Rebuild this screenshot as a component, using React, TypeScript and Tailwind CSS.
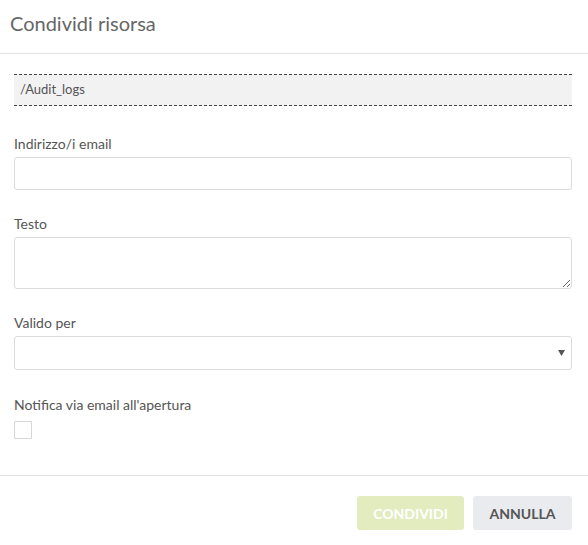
import React from "react";

export default function App() {
  return (
    <div className="w-[588px] h-[545px] bg-white flex flex-col" style={{ fontFamily: "Lato, 'Open Sans', sans-serif" }}>
      <div className="h-[54px] border-b border-[#e3e3e3] px-[10px] pt-[11px]">
        <div className="text-[20px] leading-[24px] text-[#666]">Condividi risorsa</div>
      </div>
      <div className="pl-[14px] pr-[16px] pt-[20px] flex flex-col">
        <div className="h-[32px] border-y border-dashed border-[#444] bg-[#f2f2f2] flex items-center pl-[6px] text-[13px] text-[#555]">
          /Audit_logs
        </div>
        <label className="mt-[29px] text-[14px] leading-[18px] text-[#555]">Indirizzo/i email</label>
        <input className="mt-[4px] h-[33px] border border-[#dcdcdc] rounded-[3px] outline-none" />
        <label className="mt-[25px] text-[14px] leading-[18px] text-[#555]">Testo</label>
        <textarea className="mt-[4px] h-[52px] border border-[#dcdcdc] rounded-[3px] outline-none resize-y block" />
        <label className="mt-[25px] text-[14px] leading-[18px] text-[#555]">Valido per</label>
        <div className="mt-[4px] h-[34px] border border-[#dcdcdc] rounded-[3px] flex items-center justify-end pr-[6px]">
          <svg width="7" height="6" viewBox="0 0 7 6"><path d="M0 0 L7 0 L3.5 6 Z" fill="#555" /></svg>
        </div>
        <label className="mt-[26px] text-[14px] leading-[18px] text-[#555]">Notifica via email all'apertura</label>
        <div className="mt-[7px] w-[18px] h-[18px] border border-[#d6d6d6] rounded-[1px]" />
      </div>
      <div className="mt-[36px] border-t border-[#e3e3e3] flex justify-end gap-[9px] pt-[20px] pr-[16px]">
        <button className="w-[107px] h-[34px] rounded-[3px] bg-[#e2ecbf] text-white font-bold text-[14px]">CONDIVIDI</button>
        <button className="w-[99px] h-[34px] rounded-[3px] bg-[#e9ebef] text-[#555] font-bold text-[14px]">ANNULLA</button>
      </div>
    </div>
  );
}
